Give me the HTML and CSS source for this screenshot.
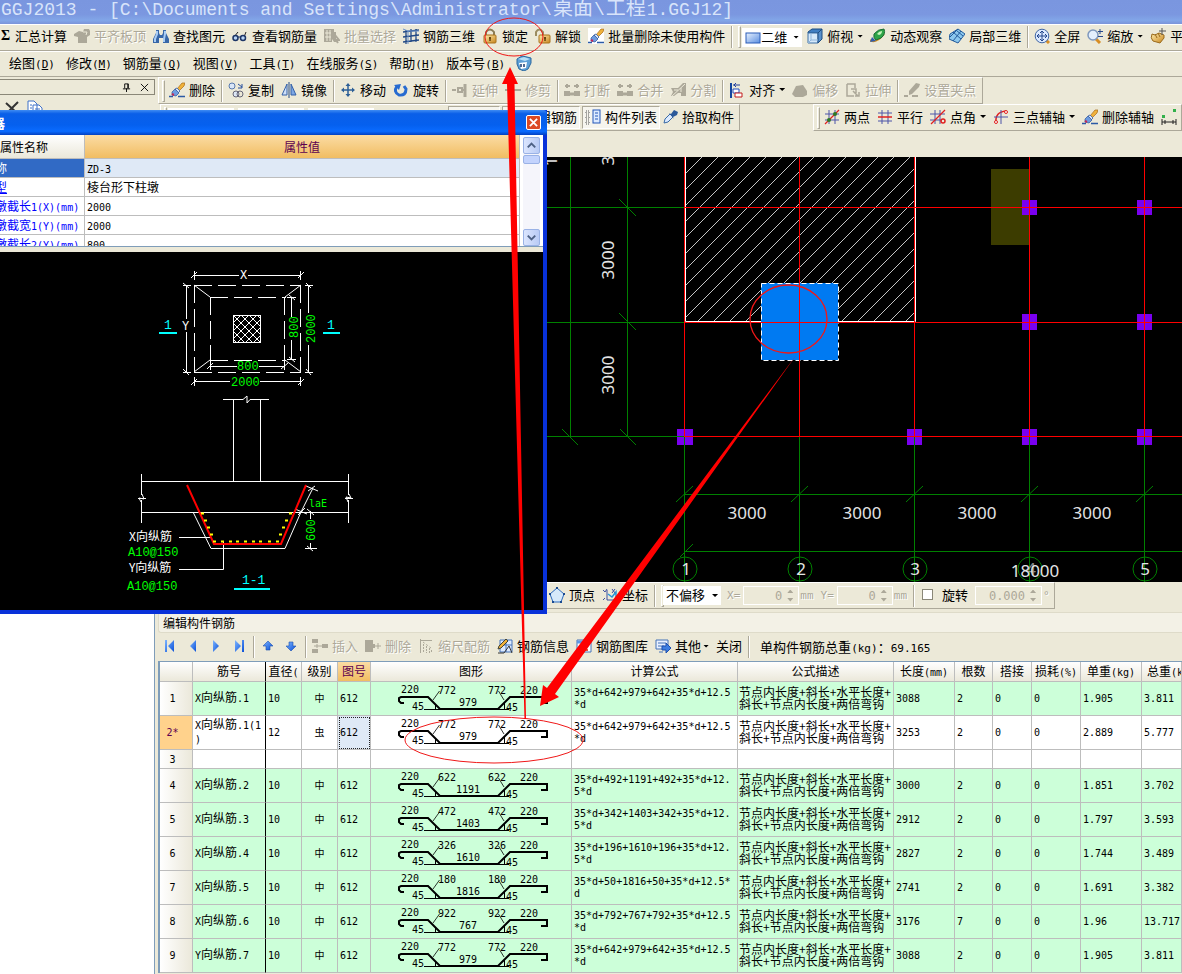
FILE: index.html
```html
<!DOCTYPE html>
<html lang="zh-CN">
<head>
<meta charset="utf-8">
<title>GGJ2013</title>
<link rel="stylesheet" href="styles.css">
</head>
<body>
<svg class="sprite" aria-hidden="true">
  <defs>
    <linearGradient id="gBlue" x1="0" y1="0" x2="1" y2="1"><stop offset="0" stop-color="#e8f2ff"/><stop offset="1" stop-color="#5b8ee0"/></linearGradient>
    <linearGradient id="gGold" x1="0" y1="0" x2="1" y2="1"><stop offset="0" stop-color="#ffeeb0"/><stop offset="1" stop-color="#c8851c"/></linearGradient>
    <linearGradient id="gNav" x1="0" y1="0" x2="1" y2="1"><stop offset="0" stop-color="#7db5ff"/><stop offset="1" stop-color="#0a50d8"/></linearGradient>
    <pattern id="hatch" width="16" height="16" patternUnits="userSpaceOnUse"><path d="M-1 12L12 -1M10 17L17 10" stroke="#c4c4c4" stroke-width="1"/></pattern>
    <pattern id="cross" width="8" height="8" x="1" y="3" patternUnits="userSpaceOnUse"><path d="M0 0L8 8M8 0L0 8" stroke="#fff" stroke-width="1"/></pattern>
  </defs>
  <symbol id="i-slab" viewBox="0 0 16 16"><path d="M0 6L5 3L9 4L10 1H15L16 3V7L13 9V15H4V9L0 8Z" fill="#aca899"/><path d="M9 4L13 4L12 7" fill="none" stroke="#ece9d8"/></symbol>
  <symbol id="i-binoc" viewBox="0 0 16 16"><path d="M3 2H6V5L7 7H9L10 5V2H13V5L16 11V15H10V10H6V15H0V11L3 5Z" fill="#3867a8"/><path d="M4 3V6L2 11V14M12 3V6L11 11V14" stroke="#a9cdf5" stroke-width="2" fill="none"/></symbol>
  <symbol id="i-glass" viewBox="0 0 16 16"><path d="M2 9L6 4M12 9L14 4" stroke="#222" fill="none"/><circle cx="3.500" cy="10" r="2.500" fill="#b9d5f5" stroke="#1c3566" stroke-width="1.500"/><circle cx="11" cy="10" r="2.500" fill="#b9d5f5" stroke="#1c3566" stroke-width="1.500"/><path d="M6 9H9" stroke="#1c3566"/></symbol>
  <symbol id="i-batch" viewBox="0 0 16 16"><path d="M0 1H10V4H12V14H10L8 11V14H0Z" fill="#aca899"/><path d="M3 2V13M6 2V13M1 5H7M1 9H7M13 5H15V15" stroke="#ece9d8" fill="none"/><path d="M11 7L15 12L12 12L14 15" stroke="#aca899" fill="none" stroke-width="2"/></symbol>
  <symbol id="i-grid3d" viewBox="0 0 16 16"><path d="M3 2V16M8 1V14M13 1V14M0 4L16 2M0 9L16 7M0 14L16 12" stroke="#234a86" stroke-width="1.300" fill="none"/><path d="M0 1L5 3V16M5 3H16" stroke="#6d93c9" fill="none"/></symbol>
  <symbol id="i-lock" viewBox="0 0 16 16"><path d="M4 8V4Q8 -1 12 4V8" fill="none" stroke="#8b7d55" stroke-width="2"/><rect x="2" y="7" width="12" height="8" rx="1" fill="url(#gGold)" stroke="#a8731c"/><path d="M8 9V13M7 10H9" stroke="#62400c" stroke-width="1.500"/></symbol>
  <symbol id="i-unlock" viewBox="0 0 16 16"><path d="M1 8V4Q4 -1 8 4V7" fill="none" stroke="#9b8c60" stroke-width="2"/><rect x="4" y="7" width="11" height="8" rx="1" fill="url(#gGold)" stroke="#a8731c"/><path d="M10 9V13M9 10H11" stroke="#62400c" stroke-width="1.500"/></symbol>
  <symbol id="i-brush" viewBox="0 0 16 16"><path d="M8 7L13 1L16 1L15 4L10 9Z" fill="#f0b23a" stroke="#a86a18" stroke-width=".7"/><path d="M6 7L8 6L11 9L9 11Z" fill="#dce6f5" stroke="#5573a8"/><path d="M3 10L6 7L10 11L7 14L3 13Z" fill="#6d9be0" stroke="#2f5596" stroke-width=".7"/><path d="M3 12L5 13" stroke="#c22857" stroke-width="2"/><path d="M0 14.500H4M9 14.500H16" stroke="#2b5aa5" stroke-width="1.500"/></symbol>
  <symbol id="i-rect" viewBox="0 0 16 16"><rect x="1" y="4" width="14" height="10" fill="url(#gBlue)" stroke="#2a5cb8"/></symbol>
  <symbol id="i-cube" viewBox="0 0 16 16"><path d="M1 4L5 1H15L11 5H1Z" fill="#3f7ec2" stroke="#1d4d82"/><path d="M1 5H11V15H1Z" fill="#d6e9fa" stroke="#3b6ea5"/><path d="M11 5L15 1V11L11 15Z" fill="#5890cc" stroke="#1d4d82"/><path d="M4 5V12H11M4 12L1 15" fill="none" stroke="#8fb6dc"/></symbol>
  <symbol id="i-orbit" viewBox="0 0 16 16"><path d="M0 12Q6 16 14 6" fill="none" stroke="#cf8b1f" stroke-width="2"/><path d="M4 6Q8 1 14 1Q16 6 11 10L6 12Q3 10 4 6Z" fill="#2fa548" stroke="#1c6c37"/><path d="M7 6Q9 3 12 3Q12 6 9 7Z" fill="#c5f5bb"/><path d="M0 14L2 9L6 13Z" fill="#305dab"/></symbol>
  <symbol id="i-local" viewBox="0 0 16 16"><path d="M1 6L9 1L16 6L9 15L0 11Z" fill="#8cc8ee" stroke="#245c9c"/><path d="M4 4L12 11M7 2L14 8M12 3L4 13M9 1L1 9" stroke="#245c9c"/></symbol>
  <symbol id="i-full" viewBox="0 0 16 16"><path d="M12 12L15 15" stroke="#d88e24" stroke-width="3"/><circle cx="8" cy="8" r="6.800" fill="#dceaff" stroke="#3f65a5"/><path d="M8 3V13M3 8H13M6 5L8 3L10 5M6 11L8 13L10 11M5 6L3 8L5 10M11 6L13 8L11 10" fill="none" stroke="#23468c"/></symbol>
  <symbol id="i-zoom" viewBox="0 0 16 16"><path d="M9 11L13 15" stroke="#d88e24" stroke-width="3"/><circle cx="6" cy="7" r="5" fill="#e4effd" stroke="#7f98bd" stroke-width="1.500"/><path d="M13 1V6M11 3.500H16M11 8.500H16" stroke="#27488c"/></symbol>
  <symbol id="i-hand" viewBox="0 0 16 16"><path d="M2 6Q0 10 3 13L10 15L14 10V7L9 5L5 7Z" fill="url(#gGold)" stroke="#9a6a1c"/><path d="M5 6L7 10M8 5L10 9" stroke="#9a6a1c"/><path d="M12 0V7M9 3H16" stroke="#555"/></symbol>
  <symbol id="i-face" viewBox="0 0 16 16"><path d="M1 4L6 1L11 2L15 3V8L12 14L8 16L3 14L1 9Z" fill="#5d9fd6" stroke="#2b689f"/><path d="M2 4L8 2L14 4L9 6Z" fill="#b8dff5"/><path d="M3 8L11 7L10 13L5 14Z" fill="#fff"/><path d="M5 9V12M8 9V12" stroke="#173b72" stroke-width="1.500"/></symbol>
  <symbol id="i-copy" viewBox="0 0 16 16"><circle cx="4" cy="4" r="3" fill="#d9e6f8" stroke="#587aae"/><circle cx="8" cy="12" r="3" fill="#dce6f5" stroke="#667"/><circle cx="12" cy="12" r="3" fill="none" stroke="#667"/><path d="M10 2L14 5M14 2V6H10" fill="none" stroke="#234d9d"/></symbol>
  <symbol id="i-mirror" viewBox="0 0 16 16"><path d="M6 2V13H1Z" fill="#cfe0f8" stroke="#3260a8"/><path d="M10 2V13H15Z" fill="#7da7e4" stroke="#3260a8"/><path d="M8 0V16" stroke="#234a86"/></symbol>
  <symbol id="i-move" viewBox="0 0 16 16"><path d="M8 2V14M2 8H14" stroke="#2c5f96" stroke-width="1.500"/><path d="M8 1L10.500 4H5.500ZM8 15L5.500 12H10.500ZM1 8L4 5.500V10.500ZM15 8L12 5.500V10.500Z" fill="#2c5f96"/></symbol>
  <symbol id="i-rotate" viewBox="0 0 16 16"><path d="M4 4Q0 10 6 13Q13 14 13 7L11 4" fill="none" stroke="#276bd0" stroke-width="3"/><path d="M1 3L8 2L6 8Z" fill="#276bd0"/></symbol>
  <symbol id="i-extend" viewBox="0 0 16 16"><path d="M13 2V15" stroke="#aca899" stroke-width="3"/><path d="M0 8H4M6 6H10V10H6ZM10 8H12" fill="none" stroke="#aca899" stroke-width="2"/></symbol>
  <symbol id="i-trim" viewBox="0 0 16 16"><path d="M0 8H6M9 8H16M8 1V15" stroke="#aca899" stroke-width="2"/></symbol>
  <symbol id="i-break" viewBox="0 0 16 16"><path d="M1 4H6M10 4H15M3 2V6M13 2V6" stroke="#aca899" stroke-width="2"/><path d="M0 9H6V14H0ZM10 9H16V14H10Z" fill="#aca899"/><path d="M6 12H10" stroke="#aca899" stroke-width="3"/></symbol>
  <symbol id="i-split" viewBox="0 0 16 16"><path d="M1 6H8L13 1H16V14H11V11H8L4 14H1L3 10Z" fill="#aca899"/><path d="M1 15L15 2M4 8H8M11 6V10" stroke="#ece9d8"/></symbol>
  <symbol id="i-align" viewBox="0 0 16 16"><path d="M2 1V16" stroke="#15469f" stroke-width="2"/><path d="M4 3H11M7 1L5 3L7 5" stroke="#223f9c" fill="none"/><path d="M4 7H10V11H4Z" fill="#fff" stroke="#244fc0"/><path d="M6 11H13V15H6Z" fill="#fff" stroke="#c21a1a"/></symbol>
  <symbol id="i-offset" viewBox="0 0 16 16"><path d="M0 12L4 4L11 3L15 9V13L11 15H3Z" fill="#aca899"/></symbol>
  <symbol id="i-stretch" viewBox="0 0 16 16"><path d="M2 2H10V6M2 2V14H9M6 7H11V11M8 9L13 14M14 10V14H10" fill="none" stroke="#aca899" stroke-width="1.500"/></symbol>
  <symbol id="i-setgrip" viewBox="0 0 16 16"><path d="M5 9L12 1L16 2L15 5L8 12L5 13Z" fill="#aca899"/><path d="M0 14H4M8 14H14" stroke="#aca899" stroke-width="2"/></symbol>
  <symbol id="i-list" viewBox="0 0 16 16"><path d="M1 2H4V5H1ZM1 7H4V10H1ZM1 12H4V15H1Z" fill="none" stroke="#555" stroke-dasharray="1 1"/><rect x="8" y="1" width="7" height="13" fill="#dceaff" stroke="#2356b8"/><path d="M10 4H13M10 7H13M10 10H13" stroke="#2356b8"/></symbol>
  <symbol id="i-pick" viewBox="0 0 16 16"><path d="M2 14L3 10L8 5L11 8L6 13Z" fill="#dbeaff" stroke="#386aa6"/><path d="M7 4L9 5L12 1L16 3L15 6L11 8L12 10Z" fill="#2c5a9a"/></symbol>
  <symbol id="i-two" viewBox="0 0 16 16"><path d="M5 1V15M11 1V15M1 5H15M1 11H15" stroke="#4d55a8"/><path d="M1 15L15 1" stroke="#e02020" stroke-width="1.300"/><circle cx="5" cy="11" r="2" fill="#2d7a24"/><circle cx="11" cy="5" r="2" fill="#2d7a24"/></symbol>
  <symbol id="i-para" viewBox="0 0 16 16"><path d="M5 1V15M11 1V15M1 4H15M1 12H15" stroke="#4d55a8"/><path d="M1 8H15" stroke="#e02020" stroke-width="1.500"/></symbol>
  <symbol id="i-angle" viewBox="0 0 16 16"><path d="M5 1V15M10 1V15M0 5H15M0 11H12" stroke="#4d55a8"/><path d="M1 15L15 1" stroke="#e02020" stroke-width="1.300"/><circle cx="13" cy="12" r="2" fill="none" stroke="#e02020" stroke-width="1.500"/></symbol>
  <symbol id="i-arc3" viewBox="0 0 16 16"><path d="M3 13Q2 3 13 2" fill="none" stroke="#e02020" stroke-width="1.500"/><path d="M8 1V15M1 8H15" stroke="#4d55a8"/><circle cx="3" cy="13" r="1.500" fill="#fff" stroke="#e02020"/><circle cx="13" cy="3" r="1.500" fill="#fff" stroke="#e02020"/></symbol>
  <symbol id="i-dim" viewBox="0 0 16 16"><path d="M1 9H4V6H1ZM12 3H15V0H12Z" fill="#32b04a"/><path d="M1 10V16M15 10V16M1 13H15M4 11V15M12 11V15" stroke="#222"/></symbol>
  <symbol id="i-vertex" viewBox="0 0 16 16"><path d="M8 1L15 7L12 15H4L1 7Z" fill="#d6e9fa" stroke="#2a6ac0"/><path d="M8 0V2M0 7H2M14 7H16M4 14V16M12 14V16" stroke="#1a4a90" stroke-width="2"/></symbol>
  <symbol id="i-coord" viewBox="0 0 16 16"><path d="M5 3V13H16M1 3L3 5L5 2M10 2L13 6M13 2L10 6M1 13L3 11" fill="none" stroke="#3c4fa0"/><path d="M6 7L10 10L14 5V13" fill="none" stroke="#2995d8" stroke-width="1.500"/></symbol>
  <symbol id="i-first" viewBox="0 0 16 16"><path d="M3 2H5V14H3ZM12 2V14L6 8Z" fill="url(#gNav)"/></symbol>
  <symbol id="i-prev" viewBox="0 0 16 16"><path d="M11 2V14L5 8Z" fill="url(#gNav)"/></symbol>
  <symbol id="i-next" viewBox="0 0 16 16"><path d="M5 2V14L11 8Z" fill="url(#gNav)"/></symbol>
  <symbol id="i-last" viewBox="0 0 16 16"><path d="M4 2V14L10 8ZM11 2H13V14H11Z" fill="url(#gNav)"/></symbol>
  <symbol id="i-up" viewBox="0 0 16 16"><path d="M8 3L13 8H10V12H6V8H3Z" fill="url(#gNav)" stroke="#1c50b0" stroke-width=".6"/></symbol>
  <symbol id="i-down" viewBox="0 0 16 16"><path d="M8 13L13 8H10V4H6V8H3Z" fill="url(#gNav)" stroke="#1c50b0" stroke-width=".6"/></symbol>
  <symbol id="i-insert" viewBox="0 0 16 16"><path d="M0 1H6V5H0ZM0 11H6V15H0ZM10 6H16V10H10Z" fill="#aca899"/><path d="M2 8H10M5 6V10" stroke="#aca899"/></symbol>
  <symbol id="i-remove" viewBox="0 0 16 16"><path d="M0 2H8V6H10V10H8V14H0Z" fill="#aca899"/><path d="M10 8H16M13 5V11" stroke="#aca899"/></symbol>
  <symbol id="i-ruler" viewBox="0 0 16 16"><path d="M2.500 1V15M2 2.500H14" fill="none" stroke="#aca899"/><path d="M5.500 6V15M8.500 8V15M11.500 10V15M13.500 12V15" stroke="#aca899" stroke-dasharray="2 1"/><path d="M5 4L13 10" stroke="#aca899" stroke-dasharray="2 2"/></symbol>
  <symbol id="i-info" viewBox="0 0 16 16"><path d="M3 2H15V14H3Z" fill="#dceaff" stroke="#4472b8"/><path d="M3 7H15M9 2V14" stroke="#4472b8"/><path d="M2 8L9 1L11 3L4 10L1 11Z" fill="#efb13c" stroke="#443"/><path d="M1 15H7L12 8L15 15" fill="none" stroke="#333"/></symbol>
  <symbol id="i-lib" viewBox="0 0 16 16"><path d="M1 2H15V14H1Z" fill="#fff" stroke="#4472b8"/><path d="M1 4H15" stroke="#5e98e5" stroke-width="3"/><path d="M4 7H7V9H4ZM9 7H12V9H9ZM9 11H12V13H9Z" fill="#e05a38"/></symbol>
  <symbol id="i-other" viewBox="0 0 16 16"><path d="M1 2H13V11H1Z" fill="#e8f0ff" stroke="#4472b8"/><path d="M3 5H11M3 8H9M4 14H8" stroke="#4472b8"/><path d="M7 8H11V5L16 10L11 15V12H7Z" fill="#3d7de0" stroke="#1d4fae"/></symbol>
  <symbol id="bar" viewBox="0 0 200 33"><path d="M33 21H30L28 19V16L30 15H57L69 27H127L139 15H176V21H170" fill="none" stroke="#000" stroke-width="2"/><path d="M53 27.500H70M126 27.500H138" fill="none" stroke="#000"/><path d="M68.500 9L62 18M127.500 9L133 18" fill="none" stroke="#000" stroke-width=".8"/><path d="M64.500 27V22M133.500 27V21" stroke="#000"/></symbol>
</svg>

<div class="app">
  <header class="title"><h1>GGJ2013 - [C:\Documents and Settings\Administrator\<span>桌面</span>\<span>工程</span>1.GGJ12]</h1></header>

  <div class="strip">
    <button class="tb"><b class="sigma">Σ</b>汇总计算</button>
    <button class="tb" disabled><svg><use href="#i-slab"/></svg>平齐板顶</button>
    <button class="tb"><svg><use href="#i-binoc"/></svg>查找图元</button>
    <button class="tb"><svg><use href="#i-glass"/></svg>查看钢筋量</button>
    <button class="tb" disabled><svg><use href="#i-batch"/></svg>批量选择</button>
    <button class="tb"><svg><use href="#i-grid3d"/></svg>钢筋三维</button>
    <button class="tb"><svg><use href="#i-lock"/></svg>锁定</button>
    <button class="tb"><svg><use href="#i-unlock"/></svg>解锁</button>
    <button class="tb"><svg class="on-white"><use href="#i-brush"/></svg>批量删除未使用构件</button>
    <i class="sep tight"></i><i class="grip"></i>
    <label class="combo"><svg><use href="#i-rect"/></svg><select aria-label="视图模式"><option>二维</option></select><i class="caret"></i></label>
    <button class="tb"><svg><use href="#i-cube"/></svg>俯视<i class="caret"></i></button>
    <button class="tb"><svg><use href="#i-orbit"/></svg>动态观察</button>
    <button class="tb"><svg><use href="#i-local"/></svg>局部三维</button>
    <i class="sep"></i>
    <button class="tb"><svg><use href="#i-full"/></svg>全屏</button>
    <button class="tb"><svg><use href="#i-zoom"/></svg>缩放<i class="caret"></i></button>
    <button class="tb"><svg><use href="#i-hand"/></svg>平移</button>
  </div>

  <nav class="menu">
    <button>绘图<span>(<u>D</u>)</span></button><button>修改<span>(<u>M</u>)</span></button><button>钢筋量<span>(<u>Q</u>)</span></button><button>视图<span>(<u>V</u>)</span></button><button>工具<span>(<u>T</u>)</span></button><button>在线服务<span>(<u>S</u>)</span></button><button>帮助<span>(<u>H</u>)</span></button><button>版本号<span>(<u>B</u>)</span></button>
    <button aria-label="在线助手"><svg><use href="#i-face"/></svg></button>
  </nav>

  <div class="body">
    <aside class="side">
      <div class="side-top">
        <div class="side-head">
          <button aria-label="固定"><svg viewBox="0 0 10 10"><path d="M3 1H7V6M3 1V6M1 6.500H9M5 6V10M6.500 1V6" fill="none" stroke="#000"/></svg></button>
          <button aria-label="关闭面板"><svg viewBox="0 0 10 10"><path d="M1 1L9 9M9 1L1 9" stroke="#000"/></svg></button>
        </div>
        <div class="side-tools">
          <button aria-label="删除构件"><svg viewBox="0 0 16 16"><path d="M2 3L14 14M14 2L2 14" stroke="#333" stroke-width="2"/></svg></button>
          <button aria-label="复制构件"><svg viewBox="0 0 16 16"><path d="M1 1H7L10 4V12H1ZM6 5H12L15 8V16H6Z" fill="#fff" stroke="#3f70c8"/><path d="M3 5H5M3 8H5M8 9H13M8 12H13" stroke="#3f70c8"/></svg></button>
        </div>
      </div>
    </aside>

    <main class="main">
      <div class="bar-row">
        <div class="bar">
          <i class="grip"></i>
          <button class="tb"><svg><use href="#i-brush"/></svg>删除</button><i class="sep"></i>
          <button class="tb"><svg><use href="#i-copy"/></svg>复制</button>
          <button class="tb"><svg><use href="#i-mirror"/></svg>镜像</button><i class="sep"></i>
          <button class="tb"><svg><use href="#i-move"/></svg>移动</button>
          <button class="tb"><svg><use href="#i-rotate"/></svg>旋转</button><i class="sep"></i>
          <button class="tb" disabled><svg><use href="#i-extend"/></svg>延伸</button>
          <button class="tb" disabled><svg><use href="#i-trim"/></svg>修剪</button><i class="sep"></i>
          <button class="tb" disabled><svg><use href="#i-break"/></svg>打断</button>
          <button class="tb" disabled><svg><use href="#i-break"/></svg>合并</button>
          <button class="tb" disabled><svg><use href="#i-split"/></svg>分割</button><i class="sep"></i>
          <button class="tb"><svg><use href="#i-align"/></svg>对齐<i class="caret"></i></button>
          <button class="tb" disabled><svg><use href="#i-offset"/></svg>偏移</button>
          <button class="tb" disabled><svg><use href="#i-stretch"/></svg>拉伸</button><i class="sep"></i>
          <button class="tb" disabled><svg><use href="#i-setgrip"/></svg>设置夹点</button>
        </div>
      </div>
      <div class="bar-row second">
        <div class="bar edit-bar">
          <i class="grip"></i>
          <select class="field" aria-label="楼层"><option>首层</option></select>
          <select class="field" aria-label="构件"><option>基础</option></select>
          <select class="field" aria-label="类型"><option>独立基础</option></select>
          <button class="tb on push">属性</button>
          <button class="tb on"><svg><use href="#i-info"/></svg>编辑钢筋</button>
          <button class="tb on"><svg><use href="#i-list"/></svg>构件列表</button>
          <button class="tb"><svg><use href="#i-pick"/></svg>拾取构件</button>
        </div>
        <div class="bar axis-bar">
          <i class="grip"></i>
          <button class="tb"><svg><use href="#i-two"/></svg>两点</button>
          <button class="tb"><svg><use href="#i-para"/></svg>平行</button>
          <button class="tb"><svg><use href="#i-angle"/></svg>点角<i class="caret"></i></button>
          <button class="tb"><svg><use href="#i-arc3"/></svg>三点辅轴<i class="caret"></i></button>
          <button class="tb"><svg><use href="#i-brush"/></svg>删除辅轴</button>
          <button class="tb" aria-label="标注"><svg><use href="#i-dim"/></svg></button>
        </div>
      </div>

      <svg class="canvas" role="img" aria-label="轴网平面图">
        <g transform="translate(-155 -157)">
          <rect x="686" y="150" width="229" height="172" fill="url(#hatch)"/>
          <rect x="991" y="169" width="39" height="76" fill="#3c3c00"/>
          <g fill="#7a00f0"><rect x="1022" y="200" width="15" height="15"/><rect x="1137" y="200" width="15" height="15"/><rect x="1022" y="314" width="15" height="16"/><rect x="1137" y="314" width="15" height="16"/><rect x="677" y="429" width="16" height="16"/><rect x="907" y="429" width="15" height="16"/><rect x="1022" y="429" width="15" height="16"/><rect x="1137" y="429" width="15" height="16"/></g>
          <path d="M685.500 157V321.500H915.500V157" fill="none" stroke="#fff"/>
          <rect x="761" y="283" width="77" height="77" fill="#007af2"/>
          <rect x="761.500" y="283.500" width="77" height="77" fill="none" stroke="#fff" stroke-dasharray="5 3"/>
          <path d="M570.500 157V437M627.500 157V437M547 207.500H685M547 322.500H685M547 436.500H685M684.500 437V582M799.500 437V582M914.500 437V582M1029.500 437V582M1144.500 437V582M684 494.500H2400M684 551.500H2400M619 199L636 216M619 313L636 330M562 429L578 445M620 429L636 445M676 502L693 486M791 502L808 486M906 502L923 486M1021 502L1038 486M1136 502L1153 486M680 557L693 544" fill="none" stroke="#008000"/>
          <g fill="none" stroke="#008000"><circle cx="685" cy="569" r="12"/><circle cx="800" cy="569" r="12"/><circle cx="915" cy="569" r="12"/><circle cx="1030" cy="569" r="12"/><circle cx="1145" cy="569" r="12"/></g>
          <path d="M684.500 157V437M799.500 157V437M914.500 157V437M1029.500 157V437M1144.500 157V437M685 207.500H2400M685 322.500H2400M685 436.500H2400" fill="none" stroke="#f00"/>
          <g class="cad-num"><text x="747" y="519">3000</text><text x="862" y="519">3000</text><text x="977" y="519">3000</text><text x="1092" y="519">3000</text><text x="686" y="575">1</text><text x="801" y="575">2</text><text x="915" y="575">3</text><text x="1031" y="575" class="dim">4</text><text x="1145" y="575">5</text><text x="1035" y="577">18000</text>
          <text transform="translate(614 260) rotate(-90)">3000</text><text transform="translate(614 375) rotate(-90)">3000</text><text transform="translate(614 146) rotate(-90)">3000</text><text transform="translate(557 142) rotate(-90)">18000</text></g>
        </g>
      </svg>

      <div class="bar-row snap-row">
        <div class="bar">
          <button class="tb"><svg><use href="#i-vertex"/></svg>顶点</button>
          <button class="tb"><svg><use href="#i-coord"/></svg>坐标</button>
          <i class="sep tight"></i><i class="grip"></i>
          <label class="combo offset"><select aria-label="偏移方式"><option>不偏移</option></select><i class="caret"></i></label>
          <label class="num">X=<input value="0" disabled><i class="spin"></i>mm</label>
          <label class="num">Y=<input value="0" disabled><i class="spin"></i>mm</label>
          <i class="sep tight"></i>
          <label class="check"><input type="checkbox">旋转</label>
          <label class="num wide"><input value="0.000" aria-label="旋转角度" disabled><i class="spin"></i>°</label>
        </div>
      </div>

      <section class="panel">
        <h2>编辑构件钢筋</h2>
        <div class="panel-bar">
          <button class="tb" aria-label="第一条"><svg><use href="#i-first"/></svg></button>
          <button class="tb" aria-label="上一条"><svg><use href="#i-prev"/></svg></button>
          <button class="tb" aria-label="下一条"><svg><use href="#i-next"/></svg></button>
          <button class="tb" aria-label="最后一条"><svg><use href="#i-last"/></svg></button><i class="sep"></i>
          <button class="tb" aria-label="上移"><svg><use href="#i-up"/></svg></button>
          <button class="tb" aria-label="下移"><svg><use href="#i-down"/></svg></button><i class="sep"></i>
          <button class="tb" disabled><svg><use href="#i-insert"/></svg>插入</button>
          <button class="tb" disabled><svg><use href="#i-remove"/></svg>删除</button>
          <button class="tb" disabled><svg><use href="#i-ruler"/></svg>缩尺配筋</button>
          <button class="tb"><svg><use href="#i-info"/></svg>钢筋信息</button>
          <button class="tb"><svg><use href="#i-lib"/></svg>钢筋图库</button>
          <button class="tb"><svg><use href="#i-other"/></svg>其他<i class="caret near"></i></button>
          <button class="tb">关闭</button><i class="sep"></i>
          <span class="total">单构件钢筋总重<span>(kg)</span>：<span>69.165</span></span>
        </div>
        <table class="steel">
          <colgroup><col class="c33"><col class="c73"><col class="c36"><col class="c36"><col class="c33"><col class="c201"><col class="c166"><col class="c156"><col class="c61"><col class="c38"><col class="c39"><col class="c49"><col class="c61"><col></colgroup>
          <thead><tr><th></th><th>筋号</th><th>直径<i>(</i></th><th>级别</th><th class="hot">图号</th><th>图形</th><th>计算公式</th><th>公式描述</th><th>长度<i>(mm)</i></th><th>根数</th><th>搭接</th><th>损耗<i>(%)</i></th><th>单重<i>(kg)</i></th><th class="cut">总重<i>(kg)</i></th></tr></thead>
          <tbody>
          <tr><th>1</th><td><i>X</i>向纵筋<i>.1</i></td><td>10</td><td class="g">中</td><td>612</td><td class="fig"><svg><use href="#bar"/><text x="39" y="11">220</text><text x="76" y="12">772</text><text x="126" y="12">772</text><text x="158" y="12">220</text><text x="97" y="24">979</text><text x="47" y="28">45</text><text x="141" y="29">45</text></svg></td><td>35*d+642+979+642+35*d+12.5<br>*d</td><td class="desc">节点内长度+斜长+水平长度+<br>斜长+节点内长度+两倍弯钩</td><td>3088</td><td>2</td><td>0</td><td>0</td><td>1.905</td><td>3.811</td></tr>
          <tr class="plain cur"><th>2*</th><td><i>X</i>向纵筋<i>.1(1<br>)</i></td><td>12</td><td class="g">虫</td><td class="sel">612</td><td class="fig"><svg><use href="#bar"/><text x="39" y="11">220</text><text x="76" y="12">772</text><text x="126" y="12">772</text><text x="158" y="12">220</text><text x="97" y="24">979</text><text x="47" y="28">45</text><text x="141" y="29">45</text></svg></td><td>35*d+642+979+642+35*d+12.5<br>*d</td><td class="desc">节点内长度+斜长+水平长度+<br>斜长+节点内长度+两倍弯钩</td><td>3253</td><td>2</td><td>0</td><td>0</td><td>2.889</td><td>5.777</td></tr>
          <tr class="plain empty"><th>3</th><td></td><td></td><td></td><td></td><td></td><td></td><td></td><td></td><td></td><td></td><td></td><td></td><td></td></tr>
          <tr><th>4</th><td><i>X</i>向纵筋<i>.2</i></td><td>10</td><td class="g">中</td><td>612</td><td class="fig"><svg><use href="#bar"/><text x="39" y="11">220</text><text x="76" y="12">622</text><text x="126" y="12">622</text><text x="158" y="12">220</text><text x="97" y="24">1191</text><text x="47" y="28">45</text><text x="141" y="29">45</text></svg></td><td>35*d+492+1191+492+35*d+12.<br>5*d</td><td class="desc">节点内长度+斜长+水平长度+<br>斜长+节点内长度+两倍弯钩</td><td>3000</td><td>2</td><td>0</td><td>0</td><td>1.851</td><td>3.702</td></tr>
          <tr><th>5</th><td><i>X</i>向纵筋<i>.3</i></td><td>10</td><td class="g">中</td><td>612</td><td class="fig"><svg><use href="#bar"/><text x="39" y="11">220</text><text x="76" y="12">472</text><text x="126" y="12">472</text><text x="158" y="12">220</text><text x="97" y="24">1403</text><text x="47" y="28">45</text><text x="141" y="29">45</text></svg></td><td>35*d+342+1403+342+35*d+12.<br>5*d</td><td class="desc">节点内长度+斜长+水平长度+<br>斜长+节点内长度+两倍弯钩</td><td>2912</td><td>2</td><td>0</td><td>0</td><td>1.797</td><td>3.593</td></tr>
          <tr><th>6</th><td><i>X</i>向纵筋<i>.4</i></td><td>10</td><td class="g">中</td><td>612</td><td class="fig"><svg><use href="#bar"/><text x="39" y="11">220</text><text x="76" y="12">326</text><text x="126" y="12">326</text><text x="158" y="12">220</text><text x="97" y="24">1610</text><text x="47" y="28">45</text><text x="141" y="29">45</text></svg></td><td>35*d+196+1610+196+35*d+12.<br>5*d</td><td class="desc">节点内长度+斜长+水平长度+<br>斜长+节点内长度+两倍弯钩</td><td>2827</td><td>2</td><td>0</td><td>0</td><td>1.744</td><td>3.489</td></tr>
          <tr><th>7</th><td><i>X</i>向纵筋<i>.5</i></td><td>10</td><td class="g">中</td><td>612</td><td class="fig"><svg><use href="#bar"/><text x="39" y="11">220</text><text x="76" y="12">180</text><text x="126" y="12">180</text><text x="158" y="12">220</text><text x="97" y="24">1816</text><text x="47" y="28">45</text><text x="141" y="29">45</text></svg></td><td>35*d+50+1816+50+35*d+12.5*<br>d</td><td class="desc">节点内长度+斜长+水平长度+<br>斜长+节点内长度+两倍弯钩</td><td>2741</td><td>2</td><td>0</td><td>0</td><td>1.691</td><td>3.382</td></tr>
          <tr><th>8</th><td><i>X</i>向纵筋<i>.6</i></td><td>10</td><td class="g">中</td><td>612</td><td class="fig"><svg><use href="#bar"/><text x="39" y="11">220</text><text x="76" y="12">922</text><text x="126" y="12">922</text><text x="158" y="12">220</text><text x="97" y="24">767</text><text x="47" y="28">45</text><text x="141" y="29">45</text></svg></td><td>35*d+792+767+792+35*d+12.5<br>*d</td><td class="desc">节点内长度+斜长+水平长度+<br>斜长+节点内长度+两倍弯钩</td><td>3176</td><td>7</td><td>0</td><td>0</td><td>1.96</td><td>13.717</td></tr>
          <tr><th>9</th><td><i>Y</i>向纵筋<i>.7</i></td><td>10</td><td class="g">中</td><td>612</td><td class="fig"><svg><use href="#bar"/><text x="39" y="11">220</text><text x="76" y="12">772</text><text x="126" y="12">772</text><text x="158" y="12">220</text><text x="97" y="24">979</text><text x="47" y="28">45</text><text x="141" y="29">45</text></svg></td><td>35*d+642+979+642+35*d+12.5<br>*d</td><td class="desc">节点内长度+斜长+水平长度+<br>斜长+节点内长度+两倍弯钩</td><td>3088</td><td>2</td><td>0</td><td>0</td><td>1.905</td><td>3.811</td></tr>
          </tbody>
        </table>
      </section>
    </main>
  </div>

  <section class="dialog" aria-label="属性编辑器">
    <div class="dlg-title"><span>器</span><button aria-label="关闭"><svg viewBox="0 0 10 10"><path d="M1 1L9 9M9 1L1 9" stroke="#fff" stroke-width="2"/></svg></button></div>
    <div class="dlg-props">
      <div class="dlg-view">
        <table class="props">
          <thead><tr><th>属性名称</th><th class="val">属性值</th></tr></thead>
          <tbody>
            <tr class="sel"><td>称</td><td><i>ZD-3</i></td></tr>
            <tr><td><u>型</u></td><td>棱台形下柱墩</td></tr>
            <tr><td>墩截长<i>1(X)(mm)</i></td><td><i>2000</i></td></tr>
            <tr><td>墩截宽<i>1(Y)(mm)</i></td><td><i>2000</i></td></tr>
            <tr><td>墩截长<i>2(Y)(mm)</i></td><td><i>800</i></td></tr>
          </tbody>
        </table>
      </div>
      <div class="scroll">
        <button aria-label="向上滚动"><svg viewBox="0 0 16 16"><path d="M4 10L8 6L12 10" fill="none" stroke="#4d6185" stroke-width="2"/></svg></button>
        <span class="thumb"></span>
        <button aria-label="向下滚动"><svg viewBox="0 0 16 16"><path d="M4 6L8 10L12 6" fill="none" stroke="#4d6185" stroke-width="2"/></svg></button>
      </div>
    </div>
    <svg class="drawing" role="img" aria-label="下柱墩参数图">
      <g transform="translate(0 -252)" fill="none" stroke="#fff">
        <path d="M194 275.500H239M248 275.500H301M194.500 271V280M300.500 271V280M191 278L197 272M298 278L304 272"/>
        <path d="M194 285.500H301M194 372.500H301M194.500 285V373M300.500 285V373" stroke-dasharray="18 6"/>
        <path d="M210 297.500H286M210 360.500H286M210.500 297V361M284.500 297V361" stroke-dasharray="18 6"/>
        <path d="M194 285L210 297M301 285L285 297M194 372L210 360M301 372L285 360"/>
        <rect x="233.500" y="315.500" width="27" height="27" fill="url(#cross)"/>
        <path d="M186.500 285V319M186.500 332V373M183 285.500H191M183 372.500H191M183 283L189 288M183 369L189 375M291.500 298V317M291.500 340V360M287 297.500H296M287 359.500H296M289 295L295 300M289 357L295 362M308.500 285V313M308.500 345V372M305 285.500H313M305 372.500H313M306 283L311 288M306 369L311 375M210 366.500H237M259 366.500H285M210.500 361V370M284.500 361V370M207 369L213 363M281 369L288 363M194 381.500H230M260 381.500H301M194.500 377V386M300.500 377V386M191 385L197 379M298 385L304 379"/>
        <path d="M223 399.500H243L247 396V403L250 399.500H269M233.500 399V481M260.500 399V481M141 481.500H349M141 512.500H349M141.500 474V495M141.500 500V523M348.500 474V495M348.500 500V523M138 498.500H146M141 502L139 498L144 499L142 494M345 498.500H353M348 502L346 497L351 498L349 494"/>
        <path d="M193 512L211 548.500H285L301 512L313 488M306 486L318 491M308 491L315 486M295 509L307 514M298 515L305 508M310.500 511V519M310.500 543V549M305 548.500H317M307 546L313 551M307 509L314 515M179 537.500H212M179 569.500H223.500V541"/>
        <path d="M187 485L214 544H281L306 485" stroke="#f00" stroke-width="2"/>
        <path d="M201 513.500H204M204 520.500H207M207 527.500H210M210 534.500H213M213 541.500H216M221 541.500H224M229 541.500H232M236 541.500H239M244 541.500H247M252 541.500H255M259 541.500H262M268 541.500H271M276 541.500H279M279 534.500H282M282 527.500H285M285 520.500H288M289 513.500H292" stroke="#ff0" stroke-width="2"/>
        <path d="M159 333H177M323 333H340M234 589H270" stroke="#0ff" stroke-width="2"/>
        <g class="cad-t" stroke="none">
          <text x="240" y="279" class="s">X</text><text x="182" y="330" class="s">Y</text>
          <text x="164" y="329" class="cy">1</text><text x="327" y="329" class="cy">1</text><text x="242" y="584" class="cy">1-1</text>
          <text x="237" y="370">800</text><text x="231" y="386">2000</text>
          <text transform="translate(298 338) rotate(-90)">800</text><text transform="translate(315 343) rotate(-90)">2000</text><text transform="translate(315 541) rotate(-90)">600</text>
          <text x="309" y="507" class="ser">laE</text><text x="128" y="556">A10@150</text><text x="127" y="590">A10@150</text>
          <text x="129" y="541" class="cn">X向纵筋</text><text x="129" y="572" class="cn">Y向纵筋</text>
        </g>
      </g>
    </svg>
  </section>

  <svg class="marks" aria-hidden="true">
    <g fill="none" stroke="#f01818"><ellipse cx="514" cy="37" rx="29" ry="19"/><ellipse cx="788.500" cy="319" rx="38.500" ry="34" stroke-width="1.300"/><ellipse cx="494" cy="740" rx="89" ry="23"/></g>
    <path d="M510 67L518 84H514.500L526 719H524.500L507 84H502ZM797 354L555 694L559 697L540 706L543 685L547 688Z" fill="#f00"/>
  </svg>
</div>
</body>
</html>
```
FILE: styles.css
```css
* { box-sizing: border-box; }
html, body { margin: 0; height: 100%; }
body, button, input, select, table {
  font-family: "Noto Sans CJK SC", sans-serif;
  font-size: 13px;
  color: #000;
}
body { background: #ece9d8; overflow: hidden; }
button { border: 0; padding: 0; background: none; }
i { font-style: normal; }
.sprite { position: absolute; width: 0; height: 0; }
.app { position: relative; min-height: 100vh; display: flex; flex-direction: column; overflow: hidden; }

.title { height: 24px; flex: none; background: linear-gradient(#7a96df, #7b97e0 60%, #82a6e8 85%, #7b94da); }
.title h1 {
  margin: 0 0 0 1px;
  font: 400 18px/20px "Liberation Mono", "Noto Sans CJK SC", monospace;
  color: #d8e4fa;
  white-space: pre;
}
.title span { font-size: 20px; line-height: 18px; padding: 0 1px; }

.strip, .menu { display: flex; align-items: center; flex: none; border-top: 1px solid #fff; border-bottom: 1px solid #aca899; white-space: nowrap; }
.strip { height: 27px; gap: 7px; padding-bottom: 1px; }
.tb { display: flex; align-items: center; gap: 4px; height: 22px; padding-bottom: 2px; flex: none; line-height: 18px; white-space: nowrap; }
.tb svg, .combo svg, .menu svg { width: 16px; height: 16px; flex: none; }
.on-white { background: #fff; }
.tb:disabled { color: #aca899; text-shadow: 1px 1px #fff; }
.sigma { width: 11px; font: bold 14px/16px "Liberation Serif", serif; }
.sep { width: 2px; height: 22px; flex: none; border-left: 1px solid #aca899; border-right: 1px solid #fff; margin: 0 -2px 0 -1px; }
.tight { margin-right: -2px; }
.grip { width: 3px; height: 22px; flex: none; border: 1px solid #fff; border-right-color: #aca899; border-bottom-color: #aca899; margin-right: -3px; }
.caret { width: 6px; height: 3px; flex: none; background: #000; clip-path: polygon(0 0, 100% 0, 50% 100%); }
.near { margin-left: -2px; }
.combo { display: flex; align-items: center; height: 19px; width: 60px; padding: 0 3px; background: #fff; flex: none; margin: 0 -2px 0 -3px; }
.combo select { appearance: none; border: 0; padding: 0 0 2px; background: none; flex: 1; min-width: 0; height: 19px; line-height: 17px; }

.menu { height: 26px; gap: 11px; padding: 0 0 3px 9px; }
.menu span { font: 11px "DejaVu Sans Mono", monospace; }
.menu svg { display: block; }

.body { display: flex; flex: 1; min-height: 0; }
.side { width: 155px; flex: none; background: #fff; border-right: 1px solid #7f9db9; }
.side-top { background: #ece9d8; height: 80px; padding-top: 2px; margin-right: -1px; }
.side-head { height: 16px; display: flex; justify-content: flex-end; align-items: center; gap: 9px; padding-right: 5px; border: 1px solid #8a8778; border-left: 0; }
.side-head svg { width: 9px; height: 9px; display: block; }
.side-tools { display: flex; gap: 7px; padding: 5px 4px; }
.side-tools svg { width: 16px; height: 16px; display: block; }

.main { flex: 1; min-width: 0; display: flex; flex-direction: column; }
.bar-row { display: flex; flex: none; height: 27px; padding-left: 3px; }
.second { height: 53px; padding-left: 5px; }
.bar { display: flex; align-items: center; gap: 7px; height: 27px; padding: 0 6px 0 3px; border: 1px solid #fff; border-right-color: #aca899; border-bottom-color: #aca899; flex: none; }
.edit-bar { width: 580px; gap: 4px; padding-right: 5px; }
.axis-bar { flex: 1; margin-left: 73px; padding-right: 0; overflow: hidden; }
.field { appearance: none; width: 66px; height: 19px; border: 0; background: #fff; padding: 0 4px; line-height: 17px; }
.on { border: 1px solid #aca899; border-right-color: #fff; border-bottom-color: #fff; background: #f6f5ee; padding: 0 2px 2px; height: 23px; margin-right: -2px; }
.push { margin-left: auto; width: 52px; }

.canvas { display: block; width: 100%; height: 425px; flex: none; background: #000; }
.cad-num { font: 17px "Noto Sans", sans-serif; fill: #e4e4e4; text-anchor: middle; }
.dim { fill: #888; }

.snap-row { padding-left: 390px; }
.snap-row .bar { width: 510px; }
.offset { width: 58px; margin: 0 -1px 0 -5px; }
.num { display: flex; align-items: center; flex: none; color: #aca899; text-shadow: 1px 1px #fff; gap: 3px; font: 11px "DejaVu Sans Mono", monospace; }
.num input { width: 56px; height: 19px; padding: 0 16px 0 2px; border: 1px solid #fff; background: none; color: #aca899; text-align: right; font: 12px "DejaVu Sans Mono", monospace; }
.spin { width: 6px; height: 12px; margin: 0 4px 0 -15px; flex: none; background: #aca899; clip-path: polygon(0 30%, 50% 0, 100% 30%, 0 30%, 0 70%, 100% 70%, 50% 100%, 0 70%); }
.wide input { width: 67px; }
.check { display: flex; align-items: center; gap: 9px; flex: none; line-height: 18px; padding: 0 0 2px 2px; }
.check input { appearance: none; width: 11px; height: 11px; margin: 0; border: 1px solid #8a8778; background: #fff; }

.panel { margin: 3px 0 0 3px; flex: 1; min-height: 0; }
.panel h2 { margin: 0; padding-left: 4px; height: 21px; font-size: 12px; line-height: 19px; font-weight: 400; background: #f3f1e6; border: 1px solid #dedbc9; border-right: 0; border-radius: 3px 0 0 3px; }
.panel-bar { display: flex; align-items: center; height: 28px; gap: 7px; padding-left: 4px; white-space: nowrap; }
.total { padding: 0 0 2px 5px; }
.total span { font: 11px "DejaVu Sans Mono", monospace; }

.steel { width: 100%; table-layout: fixed; border-collapse: separate; border-spacing: 0; border-top: 1px solid #7f9db9; border-left: 2px solid #7f9db9; background: #fff; }
.c33 { width: 33px; } .c73 { width: 73px; } .c36 { width: 36px; } .c201 { width: 201px; }
.c166 { width: 166px; } .c156 { width: 156px; } .c61 { width: 61px; } .c38 { width: 38px; }
.c39 { width: 39px; } .c49 { width: 49px; }
.steel th, .steel td { padding: 0; border: 0 solid #bdbdbd; border-width: 0 1px 1px 0; white-space: nowrap; overflow: hidden; font-weight: 400; }
.steel thead th { height: 20px; font-size: 12px; line-height: 17px; padding-bottom: 2px; background: linear-gradient(#fff, #ebe8da); text-align: center; }
.steel thead .hot { background: linear-gradient(#fbdca4, #f1bd62); color: #5c0050; }
.steel thead .cut { text-align: left; padding-left: 5px; }
.steel tbody th { background: linear-gradient(90deg, #fff, #ebe8da); font: 10px "DejaVu Sans Mono", monospace; padding-right: 7px; }
.steel tbody td { height: 34px; background: #ccffd9; padding-left: 2px; font: 10px/12px "DejaVu Sans Mono", "Noto Sans CJK SC", monospace; }
.steel tbody td:nth-child(2), .steel .desc, .steel .g { font: 12px/12px "Noto Sans CJK SC", sans-serif; padding-bottom: 1px; }
.steel tbody .desc { padding-left: 1px; }
.steel tbody .g { font-size: 10px; text-align: center; padding: 0 0 2px; }
.steel i { font: 10px/12px "DejaVu Sans Mono", monospace; }
.steel tr > :nth-child(2) { border-right-color: #000; }
.steel .plain td { background: #fff; }
.steel .empty td { height: 19px; }
.steel .cur th { background: #ffd28c; color: #5c0050; }
.steel .cur .sel { background: #dfe9f6; outline: 1px dotted #222; outline-offset: -2px; }
.steel tbody .fig { padding: 0; }
.fig svg { display: block; width: 200px; height: 33px; }
.fig use { width: 200px; height: 33px; }
.fig text { text-anchor: middle; font: 10px "DejaVu Sans Mono", monospace; }

.dialog { position: absolute; left: 0; top: 110px; width: 547px; height: 504px; border-right: 4px solid #0831d9; border-bottom: 4px solid #0831d9; background: #ece9d8; display: flex; flex-direction: column; }
.dlg-title { height: 25px; flex: none; display: flex; align-items: center; justify-content: space-between; margin-right: -4px; padding-right: 6px; background: linear-gradient(#3f8cf3, #0a5fe8 15%, #0560ef 60%, #0a6bff 85%, #0340c0); border-radius: 0 4px 0 0; }
.dlg-title span { color: #fff; font-weight: 700; font-size: 13px; margin-left: -8px; }
.dlg-title button { width: 15px; height: 15px; padding: 2px; background: #dc4a25; border: 1px solid #fff; border-radius: 2px; }
.dlg-title svg { display: block; width: 9px; height: 9px; }
.dlg-props { display: flex; height: 112px; flex: none; border-bottom: 1px solid #7f9db9; background: #fff; }
.dlg-view { flex: 1; overflow: hidden; }
.props { width: 520px; table-layout: fixed; border-spacing: 0; }
.props th, .props td { padding: 0 0 1px 2px; height: 19px; line-height: 17px; font-size: 12px; font-weight: 400; border: 0 solid #bdbdbd; border-width: 0 1px 1px 0; white-space: nowrap; }
.props th { height: 24px; background: linear-gradient(#fff, #ebe8da); width: 85px; text-align: left; padding-left: 0; }
.props .val { width: auto; text-align: center; color: #5c0050; background: linear-gradient(#fbdca4, #f1bd62); }
.props td:first-child { color: #00f; padding-left: 0; text-indent: -5px; }
.props .sel td { background: #dfe9f6; }
.props .sel td:first-child { background: #316ac5; color: #fff; }
.props i { font: 10px "DejaVu Sans Mono", monospace; }
.scroll { width: 17px; margin: 2px 3px 0 0; display: flex; flex-direction: column; gap: 1px; background: #f5f5fb; }
.scroll button { height: 17px; background: linear-gradient(90deg, #dbe5fe, #b9cbf5); border: 1px solid #9ab2e6; border-radius: 2px; }
.scroll button:last-child { margin-top: auto; }
.scroll svg { width: 15px; height: 15px; display: block; }
.thumb { height: 9px; background: #c3d3fd; border: 1px solid #9ab2e6; border-radius: 2px; }
.drawing { display: block; width: 100%; flex: 1; margin-top: 5px; background: #000; min-height: 0; }
.cad-t { font: 12px "Liberation Mono", monospace; fill: #0f0; }
.cad-t .s { font-size: 12px; fill: #fff; }
.cad-t .cy { font-size: 13px; fill: #0ff; }
.cad-t .ser { font: 10px "DejaVu Sans Mono", monospace; }
.cad-t .cn { font: 12px "Noto Sans CJK SC", sans-serif; fill: #fff; }

.marks { position: absolute; left: 0; top: 0; width: 100%; height: 100%; pointer-events: none; }
```
